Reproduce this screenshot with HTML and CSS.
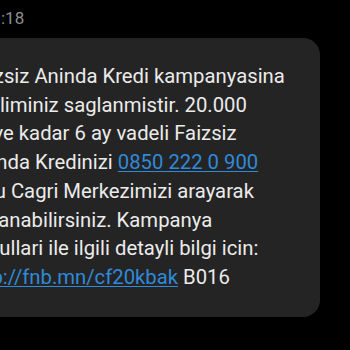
FILE: index.html
```html
<!DOCTYPE html>
<html>
<head>
<meta charset="utf-8">
<link rel="stylesheet" href="styles.css">
</head>
<body>
<div class="screen">
  <div class="time">:18</div>
  <div class="bubble">
    <p class="msg">Faizsiz Aninda Kredi kampanyasina<br>katiliminiz saglanmistir. 20.000<br>TL'ye kadar 6 ay vadeli Faizsiz<br>Aninda Kredinizi <a class="link" href="#">0850 222 0 900</a><br>nolu Cagri Merkezimizi arayarak<br>kullanabilirsiniz. Kampanya<br>kosullari ile ilgili detayli bilgi icin:<br><a class="link" href="#">http://fnb.mn/cf20kbak</a> B016</p>
  </div>
</div>
</body>
</html>
```

FILE: styles.css
```css
html, body {
  margin: 0;
  padding: 0;
  background: #000;
  overflow: hidden;
  width: 350px;
  height: 350px;
}
.screen {
  font-family: Roboto, "Noto Sans", sans-serif;
}
.time {
  color: #8e8e8e;
  font-size: 17px;
  line-height: 20px;
  padding: 8px 0 0 1px;
  height: 30px;
}
.bubble {
  background: #242424;
  width: 353px;
  margin-left: -33px;
  box-sizing: border-box;
  padding: 24px 0 25px 0;
  border-radius: 0 17px 17px 0;
}
.msg {
  margin: 0;
  color: #ebebeb;
  font-size: 20.3px;
  line-height: 28.7px;
  white-space: nowrap;
}
.link {
  color: #2f8ad9;
  text-decoration: underline;
  text-decoration-thickness: 1px;
  text-underline-offset: 2px;
}
```
